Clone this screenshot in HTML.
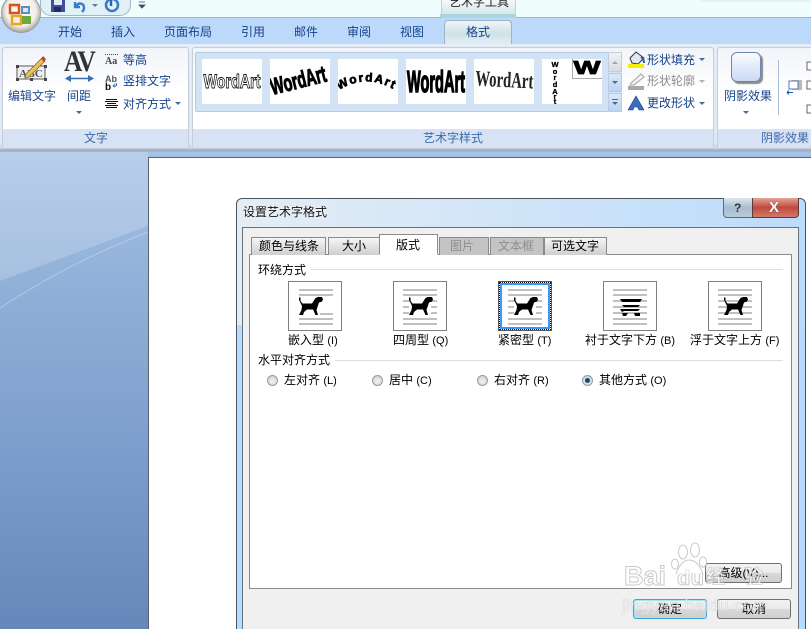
<!DOCTYPE html>
<html lang="zh"><head><meta charset="utf-8"><title>设置艺术字格式</title>
<style>
html,body{margin:0;padding:0;width:811px;height:629px;overflow:hidden;background:#fff}
body{position:relative;font-family:"Liberation Sans","Noto Sans CJK SC",sans-serif;font-size:12px}
div,span{position:absolute;box-sizing:border-box}
em{font-style:normal;font-size:11px}
.t{white-space:nowrap;line-height:14px;height:14px;color:#000}
.b{color:#15428b}.l{color:#3e6aaa}.g{color:#8d8d8d}
.arrow{width:0;height:0;border-left:3px solid transparent;border-right:3px solid transparent;border-top:3px solid #4a6a9c}
.grp{top:47px;height:102px;border:1px solid #c5cdd8;border-radius:3px;background:linear-gradient(#f1f4f9,#fff 45%,#fff)}
.lab{left:0;right:0;bottom:0;height:19px;background:#d7e2f4}
.wa{top:59px;width:60px;height:45px;background:#fff;overflow:hidden}
.tab{top:237px;height:18px;border:1px solid #8a8a8a;border-bottom:0;background:linear-gradient(#f5f5f5,#e2e2e2 50%,#cfcfcf)}
.th{top:281px;width:54px;height:50px;background:#fff;border:1px solid #808080}
.r{top:375px;width:11px;height:11px;border-radius:50%;border:1px solid #9a9a9a;background:radial-gradient(circle at 50% 60%,#f4f4f4,#c9c9c9)}
.btn{height:20px;border:1px solid #707070;border-radius:3px;background:linear-gradient(#f2f2f2,#ebebeb 48%,#d8d8d8 52%,#cfcfcf);text-align:center;line-height:18px}
svg{position:absolute;left:0;top:0;overflow:visible}
</style></head><body>

<!-- title bar -->
<div style="left:0;top:0;width:811px;height:18px;background:#effdfd;border-bottom:1px solid #a4b4c4"></div>
<div style="left:40px;top:-6px;width:91px;height:22px;border:1px solid #9fb6cc;border-radius:0 0 11px 11px;background:#e0f2f6"></div>
<div style="left:441px;top:0;width:75px;height:18px;background:linear-gradient(#f4fafa,#cfe3e6);border:1px solid #bcd2d6;border-top:0"></div>
<span class="t" style="left:449px;top:-5px;color:#222">艺术字工具</span>
<div style="left:440px;top:14px;width:76px;height:3px;background:#a9d6dc"></div>
<div style="top:-2px;height:3px;background:#e4e8e8;border-radius:2px;filter:blur(1px);left:700px;width:111px"></div>

<!-- tab row -->
<div style="left:0;top:18px;width:811px;height:27px;background:#bcd9fb"></div>
<div style="left:444px;top:20px;width:68px;height:26px;border:1px solid #9cb4c4;border-bottom:0;border-radius:4px 4px 0 0;background:linear-gradient(#eef6f8,#cfe2e8 50%,#e4f0f2)"></div>
<span class="t b" style="left:58px;top:25px">开始</span>
<span class="t b" style="left:111px;top:25px">插入</span>
<span class="t b" style="left:164px;top:25px">页面布局</span>
<span class="t b" style="left:241px;top:25px">引用</span>
<span class="t b" style="left:294px;top:25px">邮件</span>
<span class="t b" style="left:347px;top:25px">审阅</span>
<span class="t b" style="left:400px;top:25px">视图</span>
<span class="t b" style="left:466px;top:25px">格式</span>

<!-- ribbon -->
<div style="left:0;top:44px;width:811px;height:106px;background:linear-gradient(#e4edf8,#dfe9f6 92%,#bed3ec)"></div>
<div style="left:0;top:149px;width:811px;height:3px;background:#9fb4cd"></div>

<div class="grp" style="left:2px;width:187px"><div class="lab"></div></div>
<div class="grp" style="left:192px;width:522px"><div class="lab"></div></div>
<div class="grp" style="left:717px;width:100px"><div class="lab"></div></div>

<!-- quick-access + office orb -->
<svg width="811" height="150" viewBox="0 0 811 150">
 <defs>
  <radialGradient id="orb" cx="50%" cy="45%" r="55%"><stop offset="0" stop-color="#fff"/><stop offset=".7" stop-color="#f2eee8"/><stop offset="1" stop-color="#a7a49c"/></radialGradient>
 </defs>
 <circle cx="21" cy="13" r="19.500" fill="url(#orb)" stroke="#9c9a92"/>
 <rect x="10" y="5" width="9" height="8" fill="none" stroke="#d8541a" stroke-width="2.500"/>
 <rect x="21" y="6" width="9" height="8" fill="#5b8ec0"/>
 <rect x="23" y="8" width="5" height="4" fill="#d8e8f4"/>
 <rect x="12" y="16" width="9" height="8" fill="none" stroke="#eaa51c" stroke-width="2.500"/>
 <rect x="22" y="16" width="9" height="8" fill="#6ea83c"/>
 <rect x="51" y="0" width="14" height="12" fill="#3f4f9a"/><rect x="54" y="0" width="8" height="5" fill="#e6ecf6"/><rect x="54" y="7" width="7" height="5" fill="#222c60"/>
 <path d="M75 2 L75 7 L80 7 M76 6 C79 2 84 3 84 8 C84 10 83 11 82 12" fill="none" stroke="#3a7bc8" stroke-width="2.400"/>
 <path d="M92 4h6l-3 3z" fill="#6a7a90"/>
 <circle cx="112" cy="5" r="6" fill="none" stroke="#3a7bc8" stroke-width="2.600"/><path d="M111 -2v8" stroke="#2a62ac" stroke-width="2.500"/>
 <path d="M139 2h6M139 5h6l-3 3z" fill="#3d4a5e" stroke="#3d4a5e" stroke-width=".8"/>

 <!-- edit text icon -->
 <rect x="17" y="66" width="28" height="13" fill="#eef0f2" stroke="#5a5a5a"/>
 <text x="31" y="77" text-anchor="middle" font-family="Liberation Serif" font-weight="700" font-size="10" fill="#555" textLength="24" lengthAdjust="spacingAndGlyphs">ABC</text>
 <g fill="#444"><rect x="16" y="65" width="3" height="3"/><rect x="44" y="65" width="3" height="3"/><rect x="16" y="78" width="3" height="3"/><rect x="44" y="78" width="3" height="3"/><rect x="30" y="78" width="3" height="3"/></g>
 <path d="M26 74 L42 58 L45 61 L29 77 L25 78 Z" fill="#e8c15a" stroke="#8c6a2a" stroke-width=".8"/>
 <path d="M41 59 L43 56 L46 59 L44 62 Z" fill="#c0473a"/>
 <!-- AV arrows -->
 <path d="M66 78.500 H93" stroke="#3b6db5" stroke-width="1.500"/>
 <path d="M71 75 L65 78.500 L71 82 Z M88 75 L94 78.500 L88 82 Z" fill="#3b6db5"/>
 <!-- Aa -->
 <path d="M105 54.500 H118" stroke="#444" stroke-dasharray="1 1"/>
 <!-- align -->
 <path d="M106 99.500 H117 M105 101.500 H118 M107 103.500 H116 M105 105.500 H118 M106 107.500 H117" stroke="#111" stroke-width="1"/>
 <!-- vertical -->
 <path d="M113 86 q5 1 3 -3 M113 86 l2 -2 M113 86 l2 1" fill="none" stroke="#3b6db5"/>
 <!-- bucket -->
 <path d="M630 58 L636 52 L644 58 L638 64 L632 63 Z" fill="#dfe7f2" stroke="#334"/>
 <path d="M641 57 q3 2 3 6" fill="none" stroke="#2a62ac" stroke-width="2"/>
 <rect x="628" y="64" width="16" height="4" fill="#f6ee00"/>
 <!-- outline -->
 <path d="M631 83 L641 74 L644 77 L634 85 L630 85 Z" fill="#f2f2f2" stroke="#a5a5a5"/>
 <rect x="628" y="86" width="16" height="4" fill="#a8a8a8"/>
 <!-- change shape -->
 <path d="M628 110 L636 96 L644 110 L639 110 L637.500 107 L634 107 L633 110 Z" fill="#3a6cc0" stroke="#1f3f80" stroke-width=".6"/>
 <!-- shadow separator and icons -->
 <path d="M778.500 60 V115" stroke="#a9bdd8"/>
 <rect x="792" y="80" width="10" height="10" fill="#b9b9b9"/>
 <rect x="789" y="81" width="9" height="8" fill="#fff" stroke="#5b7bae"/>
 <path d="M787 92.500 H793 M787 92.500 l2 -2 M787 92.500 l2 2" stroke="#1f4fb0" fill="none"/>
 <g fill="#fff" stroke="#667"><rect x="807" y="62" width="8" height="8"/><rect x="807" y="81" width="8" height="8"/><rect x="807" y="105" width="8" height="8"/></g>
</svg>

<!-- gallery -->
<div style="left:195px;top:52px;width:426px;height:60px;background:#d2e3f6;border:1px solid #b6cbe4;border-radius:2px"></div>
<div class="wa" style="left:202px"><svg width="60" height="45"><text transform="translate(30 29) scale(1 1.15)" text-anchor="middle" font-family="Liberation Sans" font-size="17" font-weight="700" fill="#fff" stroke="#111" stroke-width=".8" textLength="57" lengthAdjust="spacingAndGlyphs">WordArt</text></svg></div>
<div class="wa" style="left:270px"><svg width="60" height="45"><text transform="translate(30 29) rotate(-14) scale(1 1.55)" text-anchor="middle" font-family="Liberation Sans" font-size="15" font-weight="700" fill="#000" stroke="#000" stroke-width=".7" textLength="57" lengthAdjust="spacingAndGlyphs">WordArt</text></svg></div>
<div class="wa" style="left:338px"><svg width="60" height="45"><defs><path id="arc" d="M1 31 Q30 13 60 33"/></defs><text font-family="Liberation Sans" font-size="12" font-weight="700" fill="#000" stroke="#000" stroke-width=".7" letter-spacing="1.500"><textPath href="#arc">WordArt</textPath></text></svg></div>
<div class="wa" style="left:406px"><svg width="60" height="45"><text transform="translate(30 33) scale(1 1.9)" text-anchor="middle" font-family="Liberation Sans" font-size="16" font-weight="700" fill="#000" stroke="#000" stroke-width=".8" textLength="58" lengthAdjust="spacingAndGlyphs">WordArt</text></svg></div>
<div class="wa" style="left:474px"><svg width="60" height="45"><text transform="translate(30 28) rotate(3) scale(1 1.3)" text-anchor="middle" font-family="Liberation Serif" font-size="17" font-weight="700" fill="#222" textLength="58" lengthAdjust="spacingAndGlyphs">WordArt</text></svg></div>
<div class="wa" style="left:542px"><svg width="60" height="45">
 <g font-family="Liberation Sans" font-size="7.500" font-weight="700" text-anchor="middle" fill="#000" stroke="#000" stroke-width=".3"><text x="13" y="8">W</text><text x="13" y="15">o</text><text x="13" y="21">r</text><text x="13" y="28">d</text><text x="13" y="35">A</text><text x="13" y="40">r</text><text x="13" y="45">t</text></g>
 <path d="M30.500 0 V19.500 H60" fill="none" stroke="#aaa"/>
 <text x="45" y="15" text-anchor="middle" font-family="Liberation Sans" font-size="18" font-weight="700" fill="#000" stroke="#000" stroke-width=".8" textLength="27" lengthAdjust="spacingAndGlyphs">W</text></svg></div>
<!-- gallery scroll -->
<div style="left:608px;top:52px;width:14px;height:20px;background:linear-gradient(#f0f2f5,#d8dce2);border:1px solid #c2cedd"></div>
<div style="left:608px;top:73px;width:14px;height:19px;background:linear-gradient(#dbe8f8,#bdd3ef);border:1px solid #b6cbe4"></div>
<div style="left:608px;top:93px;width:14px;height:19px;background:linear-gradient(#dbe8f8,#bdd3ef);border:1px solid #b6cbe4"></div>
<div class="arrow" style="left:612px;top:61px;border-top:0;border-bottom:3px solid #a0a8b4"></div>
<div class="arrow" style="left:612px;top:81px"></div>
<div class="arrow" style="left:612px;top:102px"></div>
<div style="left:612px;top:99px;width:6px;height:1px;background:#4a6a9c"></div>

<!-- ribbon text -->
<span class="t" style="left:64px;top:47px;font:700 30px/30px 'Liberation Serif',serif;height:30px;color:#333;letter-spacing:-2px;transform:scaleX(.85);transform-origin:left top">AV</span>
<span class="t" style="left:105px;top:56px;font:700 10px/12px 'Liberation Serif',serif;color:#444;height:12px">Aa</span>
<span class="t" style="left:105px;top:74px;font:700 9px/10px 'Liberation Sans',sans-serif;color:#555;height:10px">Ab</span>
<span class="t" style="left:105px;top:83px;font:700 10px/10px 'Liberation Sans',sans-serif;color:#111;height:10px">b</span>
<span class="t b" style="left:8px;top:89px;color:#1f4a90">编辑文字</span>
<span class="t b" style="left:67px;top:89px">间距</span>
<div class="arrow" style="left:76px;top:111px"></div>
<span class="t b" style="left:123px;top:53px">等高</span>
<span class="t b" style="left:123px;top:74px">竖排文字</span>
<span class="t b" style="left:123px;top:97px">对齐方式</span>
<div class="arrow" style="left:175px;top:102px"></div>
<span class="t l" style="left:84px;top:131px">文字</span>
<span class="t l" style="left:423px;top:131px">艺术字样式</span>
<span class="t b" style="left:647px;top:53px">形状填充</span>
<div class="arrow" style="left:699px;top:58px"></div>
<span class="t g" style="left:647px;top:74px">形状轮廓</span>
<div class="arrow" style="left:699px;top:80px;border-top-color:#b0b0b0"></div>
<span class="t b" style="left:647px;top:96px">更改形状</span>
<div class="arrow" style="left:699px;top:102px"></div>
<div style="left:731px;top:52px;width:30px;height:30px;border:1px solid #6d86b4;border-radius:6px;background:linear-gradient(#fbfcff,#cad9f6);box-shadow:2px 2px 1px #8a8a8a"></div>
<span class="t b" style="left:724px;top:89px">阴影效果</span>
<div class="arrow" style="left:743px;top:111px"></div>
<span class="t l" style="left:761px;top:131px">阴影效果</span>

<!-- workspace background -->
<div style="left:0;top:152px;width:811px;height:477px;background:linear-gradient(#a6c2e6,#8fafd8 30%,#7e9fcd 60%,#6587b9)"></div>
<svg width="150" height="629" viewBox="0 0 150 629">
 <path d="M0 281 L148 226 V152 H0 Z" fill="#fff" opacity=".2"/>
 <path d="M0 308 Q70 262 148 232" fill="none" stroke="#fff" stroke-opacity=".3"/>
</svg>
<div style="left:148px;top:157px;width:663px;height:472px;background:#fff;border:1px solid #5a6470;border-width:1px 0 0 1px"></div>

<!-- dialog -->
<div style="left:236px;top:198px;width:570px;height:440px;border:1px solid #4a5560;border-radius:6px 6px 0 0;background:linear-gradient(90deg,#e4edf4,#d4e6f8 40%,#bcdcfb)"></div>
<div style="left:237px;top:325px;width:5px;height:304px;background:#b8dafc"></div>
<div style="left:798px;top:325px;width:7px;height:304px;background:#b8dafc"></div>
<div style="left:242px;top:227px;width:557px;height:410px;background:#f0f0f0;border:1px solid #66727e"></div>
<span class="t" style="left:243px;top:205px;color:#111;text-shadow:0 0 3px #fff">设置艺术字格式</span>
<div style="left:723px;top:198px;width:30px;height:20px;border:1px solid #5c6b7a;border-top:0;border-radius:0 0 0 4px;background:linear-gradient(#dbe6f0,#a9bdd0 50%,#b8cad8)"></div>
<div style="left:752px;top:198px;width:47px;height:20px;border:1px solid #5c3b38;border-top:0;border-radius:0 0 4px 0;background:linear-gradient(#e2a498,#c0493c 50%,#d07a6c)"></div>
<span class="t" style="left:734px;top:201px;color:#333;font-weight:700">?</span>
<span class="t" style="left:769px;top:201px;color:#fff;font-weight:700;font-size:15px;text-shadow:0 0 1px #333">X</span>

<!-- tab panel -->
<div style="left:249px;top:254px;width:543px;height:335px;background:#fff;border:1px solid #8a8a8a"></div>
<div class="tab" style="left:251px;width:75px"></div>
<div class="tab" style="left:328px;width:52px"></div>
<div class="tab" style="left:379px;top:234px;width:59px;height:21px;background:#fff;border-bottom:1px solid #fff"></div>
<div class="tab" style="left:439px;width:50px;background:#c4c4c4"></div>
<div class="tab" style="left:490px;width:54px;background:#c4c4c4"></div>
<div class="tab" style="left:544px;width:63px"></div>
<span class="t" style="left:259px;top:239px">颜色与线条</span>
<span class="t" style="left:342px;top:239px">大小</span>
<span class="t" style="left:396px;top:238px">版式</span>
<span class="t g" style="left:450px;top:239px">图片</span>
<span class="t g" style="left:498px;top:239px">文本框</span>
<span class="t" style="left:551px;top:239px">可选文字</span>

<span class="t" style="left:258px;top:263px">环绕方式</span>
<div style="left:311px;top:269px;width:472px;height:1px;background:#d5dfe5"></div>
<span class="t" style="left:258px;top:353px">水平对齐方式</span>
<div style="left:335px;top:360px;width:448px;height:1px;background:#d5dfe5"></div>

<!-- thumbnails -->
<div class="th" style="left:288px"></div>
<div class="th" style="left:393px"></div>
<div class="th" style="left:498px;border:1px solid #555"><div style="left:0;top:0;right:0;bottom:0;border:1px dotted #000"></div><div style="left:1px;top:1px;right:1px;bottom:1px;border:2px solid #3399ff"></div></div>
<div class="th" style="left:603px"></div>
<div class="th" style="left:708px"></div>
<svg width="811" height="340" viewBox="0 0 811 340">
 <defs>
  <path id="dog" d="M1 0.500 H2.500 V4 L4.500 6.500 H14 L17.500 1 L20 0 H24 L25 2.500 L24 4.500 L21 5.500 L19.500 10 L18.500 13 L20 18 H17.500 L15 12.500 H9 L6 15 L5 18 H1 L3.500 13 L4 9 L2.500 6 L1 3 Z"/>
 </defs>
 <g stroke="#c0c0c0" stroke-width="2" fill="none">
  <path d="M299 290H333M299 295H333M320 314H333M299 319H333M299 324H333"/>
  <path d="M403 290H437M403 295H437M403 301H411M431 301H437M403 307H409M431 307H437M403 313H409M431 313H437M403 319H437M403 324H437"/>
  <path d="M508 290H542M508 295H542M508 301H516M536 301H542M508 307H514M536 307H542M508 313H514M536 313H542M508 319H542M508 324H542"/>
  <path d="M613 290H647M613 295H647M613 301H647M613 307H647M613 313H647M613 319H647M613 324H647"/>
  <path d="M718 290H752M718 295H752M718 301H752M718 307H752M718 313H752M718 319H752M718 324H752"/>
 </g>
 <use href="#dog" x="298" y="297" fill="#000"/>
 <use href="#dog" x="408" y="297" fill="#000"/>
 <use href="#dog" x="513" y="297" fill="#000"/>
 <g fill="#000"><path d="M620 299H642L640 302H622ZM622 305H640L638 307H624ZM620 309H640L638 311H624L622 312ZM622 313H628L626 316H623ZM634 313H640V316H635Z"/></g>
 <use href="#dog" x="723" y="297" fill="#000"/>
</svg>
<span class="t" style="left:288px;top:333px">嵌入型 <em>(I)</em></span>
<span class="t" style="left:393px;top:333px">四周型 <em>(Q)</em></span>
<span class="t" style="left:498px;top:333px">紧密型 <em>(T)</em></span>
<span class="t" style="left:585px;top:333px">衬于文字下方 <em>(B)</em></span>
<span class="t" style="left:690px;top:333px">浮于文字上方 <em>(F)</em></span>

<div class="r" style="left:267px"></div><span class="t" style="left:284px;top:373px">左对齐 <em>(L)</em></span>
<div class="r" style="left:372px"></div><span class="t" style="left:389px;top:373px">居中 <em>(C)</em></span>
<div class="r" style="left:477px"></div><span class="t" style="left:494px;top:373px">右对齐 <em>(R)</em></span>
<div class="r" style="left:582px"></div><div style="left:585px;top:378px;width:5px;height:5px;border-radius:50%;background:#0e4d7c"></div><span class="t" style="left:599px;top:373px">其他方式 <em>(O)</em></span>

<!-- buttons -->
<div class="btn" style="left:705px;top:563px;width:77px">高级(V)...</div>
<div class="btn" style="left:633px;top:599px;width:74px;border-color:#3aa3d8;box-shadow:inset 0 0 0 1px #a9e4f5">确定</div>
<div class="btn" style="left:717px;top:599px;width:74px">取消</div>

<!-- watermark -->
<svg width="811" height="629" viewBox="0 0 811 629" style="pointer-events:none">
 <g fill="#fff" fill-opacity=".55" stroke="#bdbdbd" stroke-opacity=".8" stroke-width="1">
  <text x="624" y="585" font-family="Liberation Sans" font-size="27" font-weight="700" textLength="42" lengthAdjust="spacingAndGlyphs">Bai</text>
  <text x="677" y="585" font-family="Liberation Sans" font-size="21" font-weight="700" textLength="27" lengthAdjust="spacingAndGlyphs">du</text>
  <ellipse cx="683" cy="552" rx="4.500" ry="7"/><ellipse cx="695" cy="550" rx="4.500" ry="7"/><ellipse cx="675" cy="564" rx="3.500" ry="5"/><ellipse cx="703" cy="562" rx="3.500" ry="5"/>
  <path d="M676 574 Q681 560 689 560 Q698 560 703 574"/>
 </g>
 <text x="706" y="583" font-family="Liberation Sans,Noto Sans CJK SC" font-size="19" font-weight="700" fill="#fff" fill-opacity=".75" stroke="#888" stroke-opacity=".6" stroke-width=".5" textLength="57">经验</text>
 <text x="622" y="611" font-family="Liberation Sans" font-size="17" fill="#fff" fill-opacity=".5" stroke="#ccc" stroke-opacity=".7" stroke-width=".6" textLength="146" lengthAdjust="spacingAndGlyphs">jingyan.baidu.com</text>
</svg>
</body></html>
